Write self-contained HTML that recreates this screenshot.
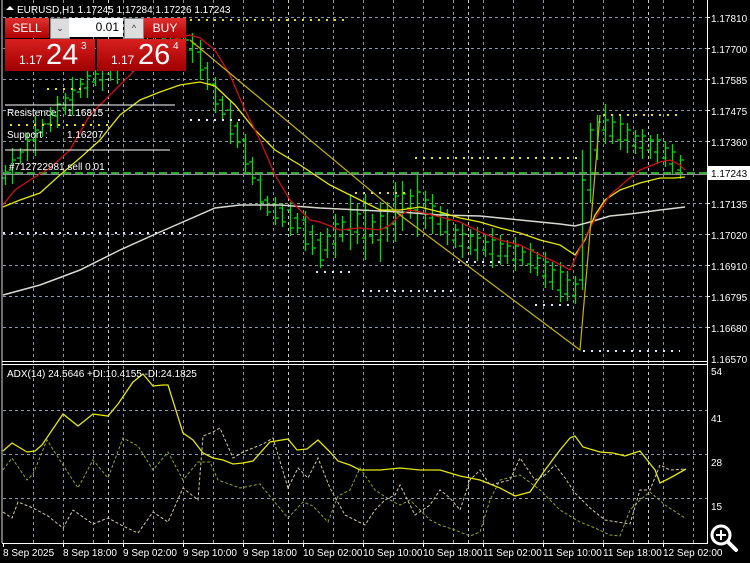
<!DOCTYPE html>
<html><head><meta charset="utf-8"><style>
html,body{margin:0;padding:0;background:#000;width:750px;height:563px;overflow:hidden;font-family:"Liberation Sans",sans-serif}
svg{position:absolute;left:0;top:0}
.t{font-family:"Liberation Sans",sans-serif;font-size:10px;fill:#fff}
.panel{position:absolute;font-family:"Liberation Sans",sans-serif;color:#fff}
</style></head><body>
<svg width="750" height="563" xmlns="http://www.w3.org/2000/svg">
<rect width="750" height="563" fill="#000"/>
<path fill="none" stroke="#8a97a6" stroke-width="1" stroke-dasharray="3,3" d="M33.5 0V543M63.5 0V543M93.5 0V543M123.5 0V543M153.5 0V543M183.5 0V543M213.5 0V543M243.5 0V543M273.5 0V543M303.5 0V543M333.5 0V543M363.5 0V543M393.5 0V543M423.5 0V543M453.5 0V543M483.5 0V543M513.5 0V543M543.5 0V543M573.5 0V543M603.5 0V543M633.5 0V543M663.5 0V543M693.5 0V543
M3 17.5H707M3 48.5H707M3 79.5H707M3 110.5H707M3 141.5H707M3 203.5H707M3 234.5H707M3 265.5H707M3 296.5H707M3 327.5H707
M3 410.5H707M3 454.5H707M3 498.5H707"/>
<path fill="none" stroke="#ccc" stroke-width="1" stroke-dasharray="3,3" d="M108.5 0V543M288.5 0V543M468.5 0V543M648.5 0V543"/>
<path fill="none" stroke="#00e000" stroke-width="1.3" d="
M5.5 165V185M2 178H5.5M5.5 172H9
M12.5 148V184M9 170H12.5M12.5 160H16
M20.5 148V164M17 158H20.5M20.5 152H24
M27.5 133V161M24 150H27.5M27.5 140H31
M35.5 116V156M32 140H35.5M35.5 130H39
M42.5 119V137M39 132H42.5M42.5 124H46
M50.5 107V132M47 124H50.5M50.5 114H54
M57.5 96V128M54 116H57.5M57.5 104H61
M65.5 93V115M62 108H65.5M65.5 98H69
M72.5 77V115M69 100H72.5M72.5 90H76
M80.5 78V98M77 92H80.5M80.5 84H84
M87.5 68V98M84 88H87.5M87.5 76H91
M95.5 70V86M92 82H95.5M95.5 74H99
M102.5 57V91M99 80H102.5M102.5 66H106
M110.5 57V81M107 74H110.5M110.5 62H114
M117.5 44V84M114 70H117.5M117.5 54H121
M125.5 50V70M122 64H125.5M125.5 54H129
M132.5 42V72M129 62H132.5M132.5 50H136
M140.5 44V62M137 56H140.5M140.5 48H144
M147.5 33V69M144 56H147.5M147.5 42H151
M155.5 36V58M152 50H155.5M155.5 42H159
M162.5 30V60M159 50H162.5M162.5 38H166
M170.5 36V56M167 50H170.5M170.5 42H174
M177.5 30V64M174 52H177.5M177.5 38H181
M185.5 35V59M182 52H185.5M185.5 40H189
M192.5 33V63M189 50H192.5M192.5 44H196
M200.5 40V80M197 52H200.5M200.5 70H204
M207.5 62V90M204 68H207.5M207.5 84H211
M215.5 77V113M212 84H215.5M215.5 104H219
M222.5 96V120M219 100H222.5M222.5 114H226
M230.5 100V144M227 110H230.5M230.5 134H234
M237.5 122V148M234 126H237.5M237.5 142H241
M245.5 134V172M242 140H245.5M245.5 164H249
M252.5 157V185M249 162H252.5M252.5 178H256
M260.5 174V210M257 180H260.5M260.5 202H264
M267.5 196V216M264 200H267.5M267.5 212H271
M275.5 197V225M272 204H275.5M275.5 218H279
M282.5 203V227M279 208H282.5M282.5 222H286
M290.5 202V236M287 210H290.5M290.5 228H294
M297.5 213V233M294 218H297.5M297.5 228H301
M305.5 211V251M302 220H305.5M305.5 244H309
M312.5 225V255M309 232H312.5M312.5 248H316
M320.5 232V268M317 240H320.5M320.5 260H324
M327.5 228V258M324 250H327.5M327.5 236H331
M335.5 214V258M332 244H335.5M335.5 224H339
M342.5 216V242M339 236H342.5M342.5 222H346
M350.5 194V250M347 230H350.5M350.5 210H354
M357.5 204V244M354 232H357.5M357.5 214H361
M365.5 194V260M362 238H365.5M365.5 210H369
M372.5 214V244M369 236H372.5M372.5 222H376
M380.5 202V262M377 240H380.5M380.5 216H384
M387.5 202V242M384 228H387.5M387.5 210H391
M395.5 182V242M392 224H395.5M395.5 196H399
M402.5 181V231M399 214H402.5M402.5 194H406
M410.5 189V219M407 208H410.5M410.5 196H414
M417.5 173V237M414 210H417.5M417.5 192H421
M425.5 191V229M422 214H425.5M425.5 200H429
M432.5 194V234M429 218H432.5M432.5 206H436
M440.5 206V236M437 224H440.5M440.5 214H444
M447.5 209V245M444 232H447.5M447.5 220H451
M455.5 224V248M452 240H455.5M455.5 230H459
M462.5 224V258M459 246H462.5M462.5 234H466
M470.5 229V255M467 248H470.5M470.5 236H474
M477.5 227V261M474 250H477.5M477.5 238H481
M485.5 235V257M482 250H485.5M485.5 242H489
M492.5 228V268M489 254H492.5M492.5 240H496
M500.5 235V265M497 256H500.5M500.5 244H504
M507.5 240V264M504 256H507.5M507.5 246H511
M515.5 237V271M512 260H515.5M515.5 246H519
M522.5 246V266M519 260H522.5M522.5 252H526
M530.5 243V273M527 264H530.5M530.5 250H534
M537.5 252V276M534 268H537.5M537.5 258H541
M545.5 252V288M542 276H545.5M545.5 262H549
M552.5 262V290M549 282H552.5M552.5 270H556
M560.5 262V302M557 290H560.5M560.5 272H564
M567.5 271V301M564 294H567.5M567.5 280H571
M575.5 276V304M572 296H575.5M575.5 284H579
M582.5 150V290M579 280H582.5M582.5 180H586
M590.5 123V203M587 190H590.5M590.5 130H594
M597.5 115V160M594 150H597.5M597.5 122H601
M605.5 104V144M602 130H605.5M605.5 120H609
M612.5 114V144M609 136H612.5M612.5 122H616
M620.5 116V150M617 140H620.5M620.5 124H624
M627.5 123V153M624 140H627.5M627.5 130H631
M635.5 130V154M632 146H635.5M635.5 136H639
M642.5 129V159M639 148H642.5M642.5 136H646
M650.5 135V159M647 150H650.5M650.5 140H654
M657.5 134V164M654 152H657.5M657.5 140H661
M665.5 141V167M662 158H665.5M665.5 148H669
M672.5 144V174M669 164H672.5M672.5 152H676
M680.5 155V179M677 170H680.5M680.5 160H684"/>
<line x1="3" y1="173" x2="707" y2="173" stroke="#2faa2f" stroke-width="2" stroke-dasharray="8,4"/>
<line x1="3" y1="174.5" x2="707" y2="174.5" stroke="#8a8f96" stroke-width="1"/>
<polyline fill="none" stroke="#d8d8d0" stroke-width="1.5" points="3,295 40,285 80,270 120,250 160,232 215,208 240,205 280,205 320,208 360,210 400,212 440,215 480,216 520,220 560,224 575,226 590,222 610,216 630,214 660,210 685,207"/>
<polyline fill="none" stroke="#e6e600" stroke-width="1.3" points="3,207 20,200 40,193 60,175 80,158 100,140 120,115 140,100 160,92 180,85 200,82 215,86 235,105 255,130 275,150 300,165 330,185 360,200 380,210 400,210 420,207 440,212 460,218 480,222 500,228 520,233 540,240 560,245 575,255 585,240 595,215 605,200 620,190 640,183 660,178 675,178 685,177"/>
<polyline fill="none" stroke="#d01010" stroke-width="1.3" points="3,205 15,190 30,180 50,168 70,150 90,115 110,95 130,75 150,55 170,40 190,35 200,38 215,50 230,75 245,110 260,140 275,175 290,200 310,220 320,222 340,230 360,228 380,230 390,225 400,215 410,210 420,212 440,217 460,222 480,232 500,240 520,245 540,255 555,262 570,270 580,248 590,228 600,210 610,195 625,182 640,170 660,162 670,160 680,165 685,170"/>
<polyline fill="none" stroke="#c8b400" stroke-width="1.2" points="190,40 400,215 580,350 600,115"/>
<g stroke-width="2" stroke-dasharray="2,6" fill="none">
<line x1="190" y1="20" x2="350" y2="20" stroke="#e8e000"/>
<line x1="47" y1="89" x2="85" y2="89" stroke="#e8e000"/>
<line x1="415" y1="158" x2="580" y2="158" stroke="#e8e000"/>
<line x1="355" y1="193" x2="410" y2="193" stroke="#e8e000"/>
<line x1="603" y1="115" x2="680" y2="115" stroke="#e8e000"/>
<line x1="10" y1="125" x2="110" y2="125" stroke="#e8e000"/>
<line x1="190" y1="120" x2="240" y2="120" stroke="#dde8ff"/>
<line x1="3" y1="233" x2="185" y2="233" stroke="#dde8ff"/>
<line x1="316" y1="272" x2="355" y2="272" stroke="#dde8ff"/>
<line x1="362" y1="291" x2="455" y2="291" stroke="#dde8ff"/>
<line x1="458" y1="262" x2="500" y2="262" stroke="#dde8ff"/>
<line x1="535" y1="305" x2="575" y2="305" stroke="#dde8ff"/>
<line x1="583" y1="351" x2="680" y2="351" stroke="#dde8ff"/>
</g>
<line x1="5" y1="105" x2="175" y2="105" stroke="#fff" stroke-width="1"/>
<line x1="5" y1="150" x2="170" y2="150" stroke="#fff" stroke-width="1"/>
<text class="t" x="7" y="116" font-size="9">Resistence :</text><text class="t" x="67" y="116" font-size="9">1.16815</text>
<text class="t" x="7" y="138" font-size="9">Support</text><text class="t" x="45" y="138" font-size="9">:</text><text class="t" x="67" y="138" font-size="9">1.16207</text>
<text class="t" x="9" y="170" font-size="9">#712722981 sell 0.01</text>
<polyline fill="none" stroke="#e6e600" stroke-width="1.3" points="3,451 12,443 27,452 35,451 42,445 63,414 78,426 93,414 108,416 118,404 133,382 143,374 153,386 163,385 168,385 183,433 193,440 203,453 213,458 223,460 233,464 243,463 253,461 270,442 288,439 297,450 307,449 318,440 330,452 338,461 350,465 360,470 380,470 400,468 420,470 440,470 460,476 480,480 500,488 515,496 530,492 545,470 560,450 570,438 575,436 583,447 600,452 613,453 625,456 640,451 655,470 660,483 670,478 686,469"/>
<polyline fill="none" stroke="#8ca820" stroke-width="1" stroke-dasharray="3,2" points="3,470 12,458 27,480 33,474 47,440 63,465 78,488 93,460 108,478 123,438 138,446 153,470 168,452 183,480 198,462 210,462 218,480 240,488 260,484 273,500 288,518 303,502 313,506 328,522 338,496 350,490 360,468 375,490 390,500 400,505 410,500 420,510 430,520 440,525 455,530 470,536 480,532 490,500 500,480 520,475 540,490 560,510 580,522 595,528 610,535 620,536 630,510 640,500 650,492 665,505 685,518"/>
<polyline fill="none" stroke="#d8c8a0" stroke-width="1" stroke-dasharray="3,2" points="3,512 12,518 18,502 33,508 48,516 63,528 73,510 93,524 108,518 123,526 138,533 153,512 168,522 183,488 198,500 203,436 213,432 220,428 233,458 243,452 263,444 273,438 288,488 298,468 308,478 318,458 330,488 345,515 355,520 365,525 375,510 385,500 395,495 400,485 415,515 430,505 440,490 450,498 460,510 470,480 480,470 490,485 510,480 520,458 535,480 545,475 555,465 565,478 575,493 590,508 605,520 630,524 640,490 650,490 660,465 670,470 686,469"/>
<line x1="2" y1="0" x2="2" y2="543" stroke="#ddd" stroke-width="1"/>
<line x1="707.5" y1="0" x2="707.5" y2="543" stroke="#fff" stroke-width="1"/>
<line x1="2" y1="361.5" x2="708" y2="361.5" stroke="#fff" stroke-width="1"/>
<line x1="2" y1="364.5" x2="708" y2="364.5" stroke="#fff" stroke-width="1"/>
<line x1="2" y1="543.5" x2="708" y2="543.5" stroke="#fff" stroke-width="1"/>
<path stroke="#fff" d="M707 17.5h3M707 48.5h3M707 79.5h3M707 110.5h3M707 141.5h3M707 203.5h3M707 234.5h3M707 265.5h3M707 296.5h3M707 327.5h3M3.5 543v4M63.5 543v4M123.5 543v4M183.5 543v4M243.5 543v4M303.5 543v4M363.5 543v4M423.5 543v4M483.5 543v4M543.5 543v4M603.5 543v4M663.5 543v4"/>
<g class="t">
<text class="t" x="711" y="22">1.17810</text><text class="t" x="711" y="53">1.17700</text><text class="t" x="711" y="84">1.17585</text><text class="t" x="711" y="115">1.17475</text><text class="t" x="711" y="146">1.17360</text><text class="t" x="711" y="208">1.17135</text><text class="t" x="711" y="239">1.17020</text><text class="t" x="711" y="270">1.16910</text><text class="t" x="711" y="301">1.16795</text><text class="t" x="711" y="332">1.16680</text><text class="t" x="711" y="363">1.16570</text>
<text class="t" x="711" y="375">54</text><text class="t" x="711" y="422">41</text><text class="t" x="711" y="466">28</text><text class="t" x="711" y="510">15</text>
<text class="t" x="3" y="556">8 Sep 2025</text><text class="t" x="63" y="556">8 Sep 18:00</text><text class="t" x="123" y="556">9 Sep 02:00</text><text class="t" x="183" y="556">9 Sep 10:00</text><text class="t" x="243" y="556">9 Sep 18:00</text><text class="t" x="303" y="556">10 Sep 02:00</text><text class="t" x="363" y="556">10 Sep 10:00</text><text class="t" x="423" y="556">10 Sep 18:00</text><text class="t" x="483" y="556">11 Sep 02:00</text><text class="t" x="543" y="556">11 Sep 10:00</text><text class="t" x="603" y="556">11 Sep 18:00</text><text class="t" x="663" y="556">12 Sep 02:00</text>
</g>
<rect x="708" y="166" width="42" height="14" fill="#fff"/>
<text x="711" y="177" font-size="10" fill="#000" font-family="Liberation Sans">1.17243</text>
<text class="t" x="7" y="377">ADX(14) 24.5646 +DI:10.4155 -DI:24.1825</text>
<path d="M6 10 L10 6 L14 10 Z" fill="#fff"/>
<text class="t" x="17" y="13">EURUSD,H1  1.17245 1.17284 1.17226 1.17243</text>
<circle cx="721" cy="535" r="9" fill="#000" stroke="#fff" stroke-width="3"/>
<line x1="728" y1="542" x2="736" y2="550" stroke="#fff" stroke-width="4" stroke-linecap="round"/>
<line x1="716" y1="535" x2="726" y2="535" stroke="#fff" stroke-width="2"/>
<line x1="721" y1="530" x2="721" y2="540" stroke="#fff" stroke-width="2"/>
</svg>
<div class="panel" style="left:5px;top:18px;width:44px;height:20px;background:linear-gradient(#e03030,#b00000);font-size:12px;text-align:center;line-height:20px">SELL</div>
<div class="panel" style="left:50px;top:18px;width:18px;height:19px;background:#ddd;border:1px solid #888;color:#333;font-size:9px;text-align:center;line-height:19px">&#8964;</div>
<div class="panel" style="left:69px;top:18px;width:54px;height:19px;background:#fff;color:#000;font-size:12px;text-align:right;line-height:19px;box-sizing:border-box;padding-right:4px">0.01</div>
<div class="panel" style="left:124px;top:18px;width:18px;height:19px;background:#ddd;border:1px solid #888;color:#333;font-size:9px;text-align:center;line-height:19px">^</div>
<div class="panel" style="left:144px;top:18px;width:42px;height:20px;background:linear-gradient(#e03030,#b00000);font-size:12px;text-align:center;line-height:20px">BUY</div>
<div class="panel" style="left:5px;top:39px;width:90px;height:32px;background:linear-gradient(#d82020,#a00000)"><span style="position:absolute;left:14px;top:14px;font-size:12px">1.17</span><span style="position:absolute;left:41px;top:0px;font-size:29px">24</span><span style="position:absolute;left:76px;top:2px;font-size:10px">3</span></div>
<div class="panel" style="left:97px;top:39px;width:89px;height:32px;background:linear-gradient(#d82020,#a00000)"><span style="position:absolute;left:14px;top:14px;font-size:12px">1.17</span><span style="position:absolute;left:41px;top:0px;font-size:29px">26</span><span style="position:absolute;left:76px;top:2px;font-size:10px">4</span></div>
</body></html>
